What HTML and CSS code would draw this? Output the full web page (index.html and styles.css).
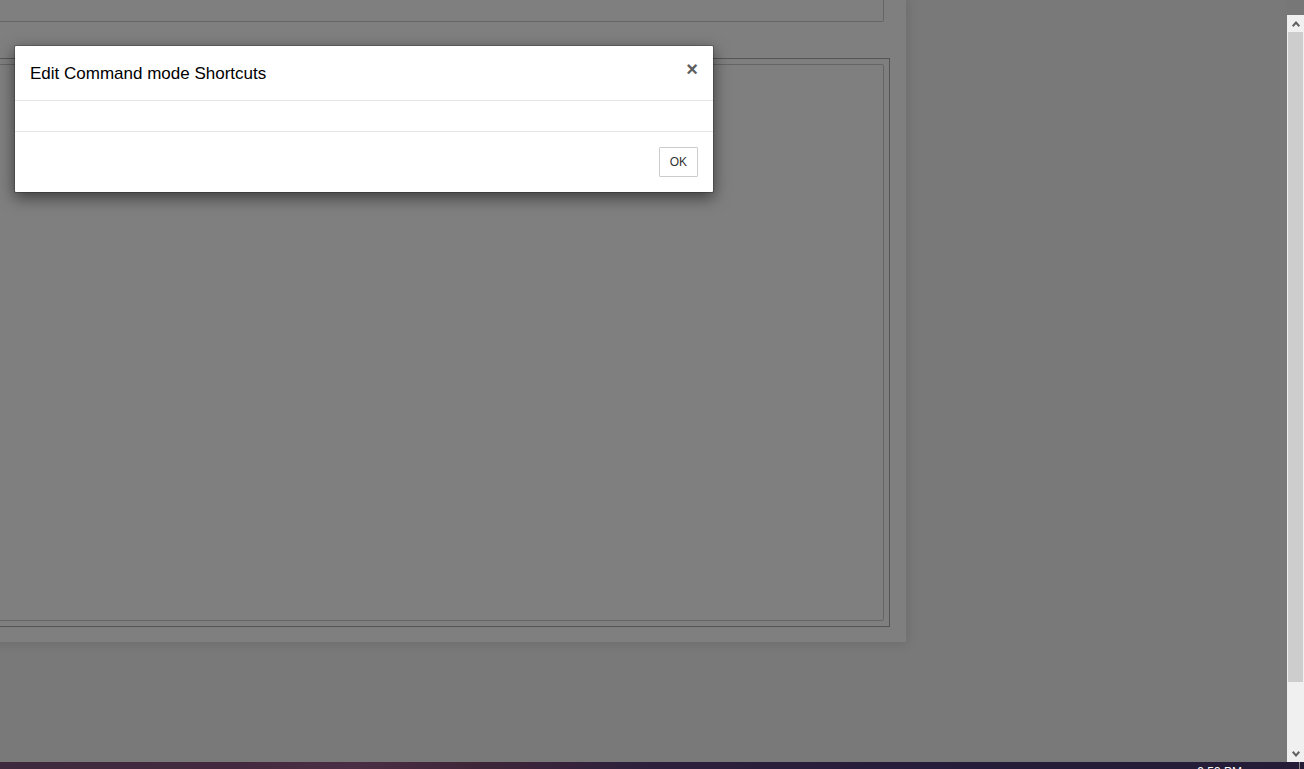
FILE: index.html
```html
<!DOCTYPE html>
<html lang="en">
<head>
<meta charset="utf-8">
<title>Edit Command mode Shortcuts</title>
<link rel="stylesheet" href="styles.css">
</head>
<body>
<div class="screen">
  <div class="viewport">
    <div class="page">
      <div class="panel">
        <div class="toolbox"></div>
        <div class="outer"><div class="inner"></div></div>
      </div>
    </div>
    <div class="backdrop"></div>
    <div class="modal" role="dialog">
      <div class="modal-header">
        <button class="close" type="button">&times;</button>
        <h4 class="modal-title">Edit Command mode Shortcuts</h4>
      </div>
      <div class="modal-body"></div>
      <div class="modal-footer">
        <button class="btn" type="button">OK</button>
      </div>
    </div>
  </div>
  <div class="scroll-col">
    <div class="scrollbar">
      <div class="arrow"><svg width="8" height="6" viewBox="0 0 8 6"><path d="M0.7 5.2 L4 1.6 L7.3 5.2" fill="none" stroke="#606060" stroke-width="2"/></svg></div>
      <div class="track"><div class="thumb"></div></div>
      <div class="arrow"><svg width="8" height="6" viewBox="0 0 8 6"><path d="M0.7 0.8 L4 4.4 L7.3 0.8" fill="none" stroke="#606060" stroke-width="2"/></svg></div>
    </div>
  </div>
</div>
<div class="taskbar">
  <span class="clock">9:53 PM</span>
  <span class="sep"></span>
</div>
</body>
</html>
```
FILE: styles.css
```css
* { box-sizing: border-box; }
html, body { margin: 0; padding: 0; }
body {
  width: 1304px;
  height: 769px;
  overflow: hidden;
  font-family: "Liberation Sans", Arial, sans-serif;
  background: #787878;
}
.screen {
  display: flex;
  height: 762px;
}
.viewport {
  flex: 1;
  position: relative;
  overflow: hidden;
}
.page {
  height: 100%;
  background: #f3f3f3;
}
.panel {
  width: 946px;
  height: 642px;
  margin-left: -40px;
  padding: 0 16px 15px 16px;
  background: #ffffff;
  box-shadow: 0 0 12px 1px rgba(87, 87, 87, 0.2);
  display: flex;
  flex-direction: column;
}
.toolbox {
  height: 22px;
  margin-right: 6px;
  border-right: 1px solid #cbcbcb;
  border-bottom: 1px solid #cbcbcb;
  border-bottom-right-radius: 2px;
}
.outer {
  margin-top: 36px;
  height: 569px;
  padding: 5px;
  border: 1px solid #aaaaaa;
}
.inner {
  height: 100%;
  border: 1px solid #cbcbcb;
  border-radius: 2px;
}
.backdrop {
  position: absolute;
  inset: 0;
  background: rgba(0, 0, 0, 0.5);
}
.modal {
  position: absolute;
  left: 14px;
  top: 45px;
  width: 700px;
  background: #fff;
  background-clip: padding-box;
  border: 1px solid rgba(0, 0, 0, 0.2);
  border-radius: 2px;
  box-shadow: 0 5px 15px rgba(0, 0, 0, 0.5);
}
.modal-header {
  padding: 16px 15px 14px 15px;
  border-bottom: 1px solid #e5e5e5;
}
.modal-title {
  margin: 0;
  font-size: 17px;
  font-weight: normal;
  line-height: 24px;
  color: #000;
}
.close {
  float: right;
  margin-top: -3px;
  padding: 0;
  border: 0;
  background: transparent;
  font-family: "Liberation Sans", Arial, sans-serif;
  font-size: 20px;
  font-weight: bold;
  line-height: 1;
  color: #5e5e5e;
}
.modal-body {
  padding: 15px;
}
.modal-footer {
  padding: 15px;
  border-top: 1px solid #e5e5e5;
  display: flex;
  justify-content: flex-end;
}
.btn {
  margin: 0;
  padding: 5px 10px;
  font-family: "Liberation Sans", Arial, sans-serif;
  font-size: 12px;
  line-height: 18px;
  color: #333;
  background: #fff;
  border: 1px solid #ccc;
  border-radius: 1px;
}
.scroll-col {
  width: 17px;
  padding-top: 15px;
  background: #777777;
  display: flex;
}
.scrollbar {
  flex: 1;
  background: #f0f0f0;
  display: flex;
  flex-direction: column;
}
.arrow {
  height: 17px;
  display: flex;
  align-items: center;
  justify-content: center;
}
.track {
  flex: 1;
  display: flex;
  flex-direction: column;
}
.thumb {
  height: 650px;
  margin: 0 1px;
  background: #cdcdcd;
}
.taskbar {
  height: 7px;
  overflow: hidden;
  display: flex;
  justify-content: flex-end;
  align-items: flex-start;
  background: linear-gradient(90deg, #3d2a3e 0%, #43293f 18%, #4a2e45 27%, #3f2639 36%, #2d203c 50%, #261d3a 70%, #251c38 100%);
}
.clock {
  margin-right: 57px;
  padding-top: 3px;
  font-size: 12px;
  line-height: 14px;
  color: #fff;
}
.sep {
  width: 1px;
  height: 7px;
  margin-right: 4px;
  background: #8a8a8a;
}
```
